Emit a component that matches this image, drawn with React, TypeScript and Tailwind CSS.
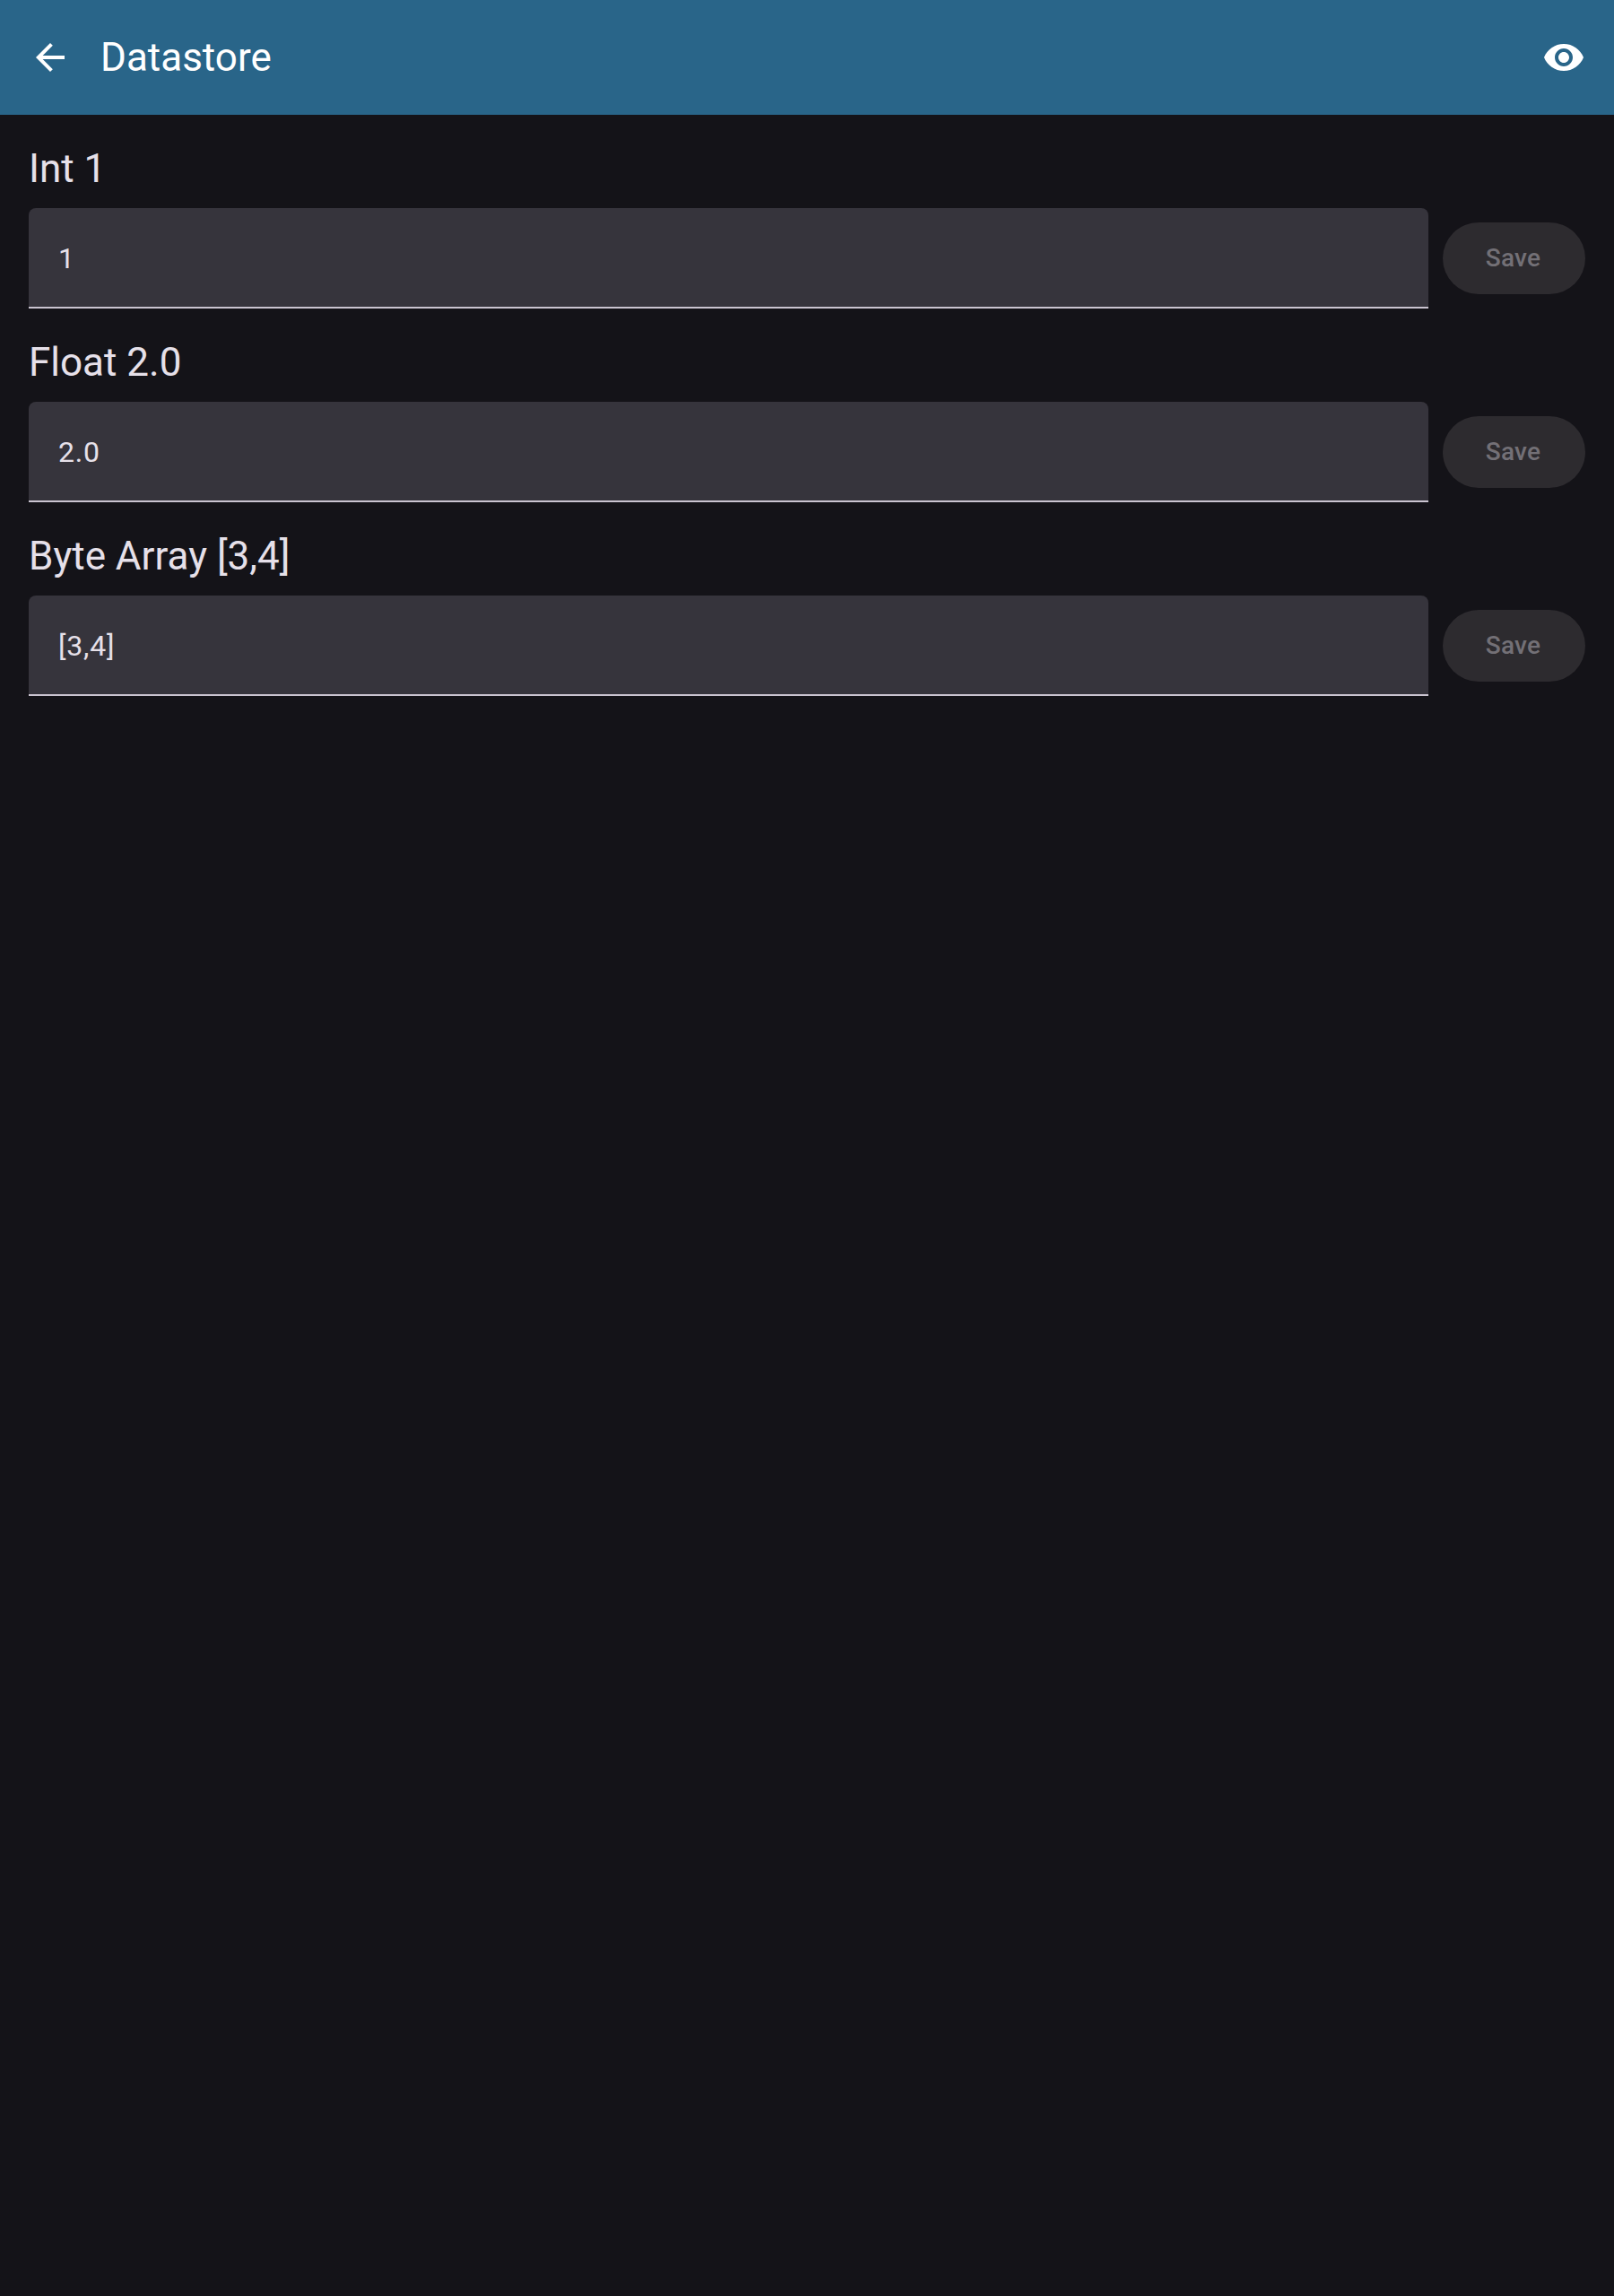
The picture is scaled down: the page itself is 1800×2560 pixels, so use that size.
import { useState } from "react";

const entries = [
  { label: "Int 1", value: "1" },
  { label: "Float 2.0", value: "2.0" },
  { label: "Byte Array [3,4]", value: "[3,4]" },
];

function BackIcon() {
  return (
    <svg viewBox="0 0 24 24" className="size-12 shrink-0" fill="currentColor">
      <path d="M20 11H7.83l5.59-5.59L12 4l-8 8 8 8 1.41-1.41L7.83 13H20v-2z" />
    </svg>
  );
}

function EyeIcon() {
  return (
    <svg viewBox="0 0 24 24" className="size-12 shrink-0" fill="currentColor">
      <path d="M12 4.5C7 4.5 2.73 7.61 1 12c1.73 4.39 6 7.5 11 7.5s9.27-3.11 11-7.5c-1.73-4.39-6-7.5-11-7.5zM12 17c-2.76 0-5-2.24-5-5s2.24-5 5-5 5 2.24 5 5-2.24 5-5 5zm0-8c-1.66 0-3 1.34-3 3s1.34 3 3 3 3-1.34 3-3-1.34-3-3-3z" />
    </svg>
  );
}

function Entry({ label, value }: { label: string; value: string }) {
  const [text, setText] = useState(value);
  return (
    <section className="flex flex-col gap-4">
      <h2 className="text-[44px] leading-[56px]">{label}</h2>
      <div className="flex items-center gap-4">
        <input
          aria-label={label}
          value={text}
          onChange={(e) => setText(e.target.value)}
          className="h-28 min-w-0 flex-1 rounded-t-lg border-b-2 border-[#cac4d0] bg-[#36343c] px-[33px] pt-0.5 text-[32px] leading-[48px] tracking-[0.8px] outline-none"
        />
        <button
          disabled={text === value}
          className="h-20 w-[159px] shrink-0 rounded-full bg-[#2d2b2f] pr-0.5 text-[28px] leading-10 font-medium tracking-[0.2px] text-[#737076]"
        >
          Save
        </button>
      </div>
    </section>
  );
}

export default function App() {
  return (
    <div className="min-h-screen bg-[#141318] font-['Roboto',sans-serif] text-[#e6e0e9]">
      <header className="flex h-32 items-center bg-[#296589] px-8 text-white">
        <button aria-label="Back">
          <BackIcon />
        </button>
        <h1 className="ml-8 flex-1 text-[44px] leading-[56px]">Datastore</h1>
        <button aria-label="Show">
          <EyeIcon />
        </button>
      </header>
      <main className="flex flex-col gap-8 p-8">
        {entries.map((entry) => (
          <Entry key={entry.label} {...entry} />
        ))}
      </main>
    </div>
  );
}
